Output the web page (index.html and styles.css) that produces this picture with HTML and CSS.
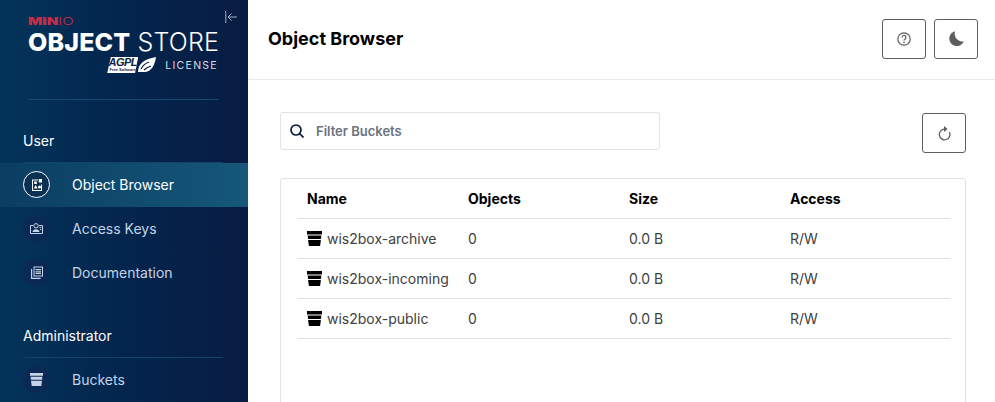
FILE: index.html
```html
<!DOCTYPE html>
<html lang="en">
<head>
<meta charset="utf-8">
<title>Object Browser</title>
<link rel="stylesheet" href="styles.css">
</head>
<body>
<div class="app">
  <aside class="sidebar">
    <div class="brand">
      <svg class="collapse" viewBox="0 0 12 12" width="12" height="12"><path d="M.8 0v12M12 6H3M6.500 2.500 3 6l3.500 3.500" fill="none" stroke="#9fb0c2" stroke-width="1"/></svg>
      <div class="logo-minio"><span class="min">MIN</span><span class="io">IO</span></div>
      <div class="logo-title"><b>OBJECT</b> <span>STORE</span></div>
      <div class="logo-license">
        <span class="agpl">
          <span class="agpl-box"><i>AGPL</i><small>Free Software</small></span>
          <svg viewBox="0 0 18 16" width="18" height="16"><path d="M0 15C0 7 6 2 18 0c-1 7-4 15-12 15Z" fill="#fff"/><path d="M3 12C5 8 8 6 11 5M6 13c2-2 4-3 7-4" fill="none" stroke="#0a2448" stroke-width="1.200"/></svg>
        </span>
        <span class="lic">LICENSE</span>
      </div>
    </div>
    <div class="brand-rule"></div>

    <div class="section-label user-label">User</div>
    <div class="section-rule"></div>
    <a class="nav-item active">
      <span class="nav-icon"><svg viewBox="0 0 10 12" width="10" height="12"><path fill-rule="evenodd" d="M0 .5h6v1H1v9.500h8V5.500h1V12H0Z" fill="#fff"/><path d="M6.800 0H10v3.600H6.800ZM2.200 2.500h2.600v2.600H2.200ZM3.700 6l2 3.500H1.700ZM7.500 6.500a1.500 1.500 0 1 1 0 3 1.500 1.500 0 0 1 0-3Z" fill="#fff"/></svg></span>
      <span>Object Browser</span>
    </a>
    <a class="nav-item">
      <span class="nav-icon"><svg viewBox="0 0 13 11" width="13" height="11"><path d="M3 2.500H.5v8h12v-8H9" fill="none" stroke="#c5d3e6"/><circle cx="6" cy="2.800" r="2.200" fill="none" stroke="#c5d3e6"/><path d="M2.500 9c.3-2 1.500-2.800 3.500-2.800S9.200 7 9.500 9Z" fill="#c5d3e6"/><path d="M9.500 4.500h1.800M10 6.500h1.300" stroke="#c5d3e6"/></svg></span>
      <span>Access Keys</span>
    </a>
    <a class="nav-item">
      <span class="nav-icon"><svg viewBox="0 0 12 13" width="12" height="13"><path d="M.6 3v9.400h9" fill="none" stroke="#c5d3e6" stroke-width="1.200"/><path fill-rule="evenodd" d="M2.500.5H12v10H2.500ZM3.500 1.500v8H11v-8ZM4.500 3h5.500v1.200H4.500Zm0 2.200h5.500v1.200H4.500Zm0 1.900h5.500v1H4.500Z" fill="#c5d3e6"/></svg></span>
      <span>Documentation</span>
    </a>

    <div class="section-label admin-label">Administrator</div>
    <div class="section-rule"></div>
    <a class="nav-item">
      <span class="nav-icon"><svg viewBox="0 0 13 13" width="13" height="13"><path d="M0 0h13v2.800H0ZM.6 3.800h11.800l-.3 3H.9ZM1 7.800h11L11.300 13H1.700Z" fill="#c5d3e6"/></svg></span>
      <span>Buckets</span>
    </a>
  </aside>

  <main class="main">
    <header class="topbar">
      <h1>Object Browser</h1>
      <div class="top-actions">
        <button class="icon-btn" type="button"><svg viewBox="0 0 14 14" width="14" height="14"><circle cx="7" cy="7" r="6.200" fill="none" stroke="#5e5e5e" stroke-width="1.200"/><path d="M5 5.500a2 2 0 1 1 3 1.700c-.7.400-1 .8-1 1.400" fill="none" stroke="#5e5e5e" stroke-width="1.200"/><circle cx="7" cy="10.400" r=".8" fill="#5e5e5e"/></svg></button>
        <button class="icon-btn" type="button"><svg viewBox="0 0 15 15" width="15" height="15"><path d="M6 .3A8 8 0 0 0 14.700 10.500 7.500 7.500 0 1 1 6 .3Z" fill="#5e5e5e"/></svg></button>
      </div>
    </header>
    <section class="content">
      <div class="toolbar">
        <label class="search">
          <svg viewBox="0 0 14 14" width="14" height="14"><circle cx="6" cy="6" r="5" fill="none" stroke="#081c42" stroke-width="1.700"/><path d="m9.500 9.500 4 4" stroke="#081c42" stroke-width="1.700"/></svg>
          <span>Filter Buckets</span>
        </label>
        <button class="icon-btn refresh" type="button"><svg viewBox="0 0 13 15" width="13" height="15"><path d="M6.500 3.200A5.300 5.300 0 1 0 11.300 6" fill="none" stroke="#5e5e5e" stroke-width="1.300"/><path d="M6 0v6l3.600-3Z" fill="#5e5e5e"/></svg></button>
      </div>
      <div class="card">
        <table>
          <thead>
            <tr><th class="c1">Name</th><th class="c2">Objects</th><th class="c3">Size</th><th>Access</th></tr>
          </thead>
          <tbody>
            <tr><td><span class="bucket"><svg viewBox="0 0 15 15" width="15" height="15"><path d="M0 0h15v3.500H0ZM.7 4.500h13.600l-.3 3.500H1ZM1.100 9h12.800l-.8 6H1.900Z" fill="#000"/></svg>wis2box-archive</span></td><td>0</td><td>0.0 B</td><td>R/W</td></tr>
            <tr><td><span class="bucket"><svg viewBox="0 0 15 15" width="15" height="15"><path d="M0 0h15v3.500H0ZM.7 4.500h13.600l-.3 3.500H1ZM1.100 9h12.800l-.8 6H1.900Z" fill="#000"/></svg>wis2box-incoming</span></td><td>0</td><td>0.0 B</td><td>R/W</td></tr>
            <tr><td><span class="bucket"><svg viewBox="0 0 15 15" width="15" height="15"><path d="M0 0h15v3.500H0ZM.7 4.500h13.600l-.3 3.500H1ZM1.100 9h12.800l-.8 6H1.900Z" fill="#000"/></svg>wis2box-public</span></td><td>0</td><td>0.0 B</td><td>R/W</td></tr>
          </tbody>
        </table>
      </div>
    </section>
  </main>
</div>
</body>
</html>
```

FILE: styles.css
```css
* { box-sizing: border-box; }
html, body { margin: 0; height: 100%; overflow: hidden; background: #fff; }
body { font-family: Inter, "Liberation Sans", sans-serif; color: #000; }
.app { display: flex; height: 402px; overflow: hidden; }

.sidebar {
  width: 248px; flex: none; height: 402px; overflow: hidden;
  background: linear-gradient(90deg, #04345a 0%, #03264e 45%, #081c42 100%);
  color: #fff;
}
.brand { position: relative; height: 99px; padding: 16px 0 0 28px; }
.collapse { position: absolute; left: 225px; top: 11px; }
.logo-minio { font-family: Inter, sans-serif; font-size: 10px; line-height: 11px; height: 11px; font-weight: 900; transform: scaleX(1.5); transform-origin: 0 50%; color: #c72c48; }
.io { font-weight: 300; }
.logo-title { font-family: Inter, sans-serif; font-size: 25px; line-height: 27px; margin-top: 2px; white-space: nowrap; letter-spacing: .15px; }
.logo-title b { font-weight: 800; }
.logo-title span { font-weight: 300; }
.logo-license { display: flex; align-items: center; justify-content: flex-end; width: 190px; margin-top: 0; height: 18px; }
.agpl { display: flex; align-items: center; margin-right: 9px; }
.agpl-box { display: flex; flex-direction: column; align-items: center; width: 31px; height: 16px; background: #fff; color: #0a2448; clip-path: polygon(12% 0, 100% 0, 90% 100%, 0 100%); }
.agpl-box i { font: italic 700 11px/11px "Liberation Sans", sans-serif; letter-spacing: -.6px; }
.agpl-box small { font: 700 4px/4px "Liberation Sans", sans-serif; }
.lic { font-family: Inter, sans-serif; font-size: 10.500px; letter-spacing: 1.300px; color: #d5dde8; }
.brand-rule { height: 1px; width: 190px; margin-left: 28px; background: #144a70; }

.section-label { font-size: 14px; line-height: 17px; padding-left: 23px; color: #fff; }
.user-label { margin-top: 32px; }
.admin-label { margin-top: 32px; }
.section-rule { height: 1px; width: 200px; margin: 13px 0 0 23px; background: #124468; }
.nav-item { display: flex; align-items: center; gap: 22px; height: 44px; padding: 0 0 1px 23px; font-size: 14px; color: #c5d3e6; }
.nav-icon { width: 27px; height: 27px; border-radius: 50%; background: #0a2a55; display: flex; align-items: center; justify-content: center; flex: none; }
.nav-item.active { background: linear-gradient(90deg, #0b3d62 0%, #15587a 100%); color: #fff; }
.nav-item.active .nav-icon { background: #0b3152; border: 1px solid #fff; }

.main { flex: 1; min-width: 0; }
.topbar { height: 80px; border-bottom: 1px solid #eaeaea; display: flex; align-items: center; justify-content: space-between; padding: 0 17px 0 20px; }
.topbar h1 { font-size: 18px; font-weight: 700; margin: 0 0 2px; }
.top-actions { display: flex; gap: 8px; margin-top: -2px; }
.icon-btn { width: 44px; height: 40px; padding: 0; background: #fff; border: 1px solid #5e5e5e; border-radius: 3px; display: flex; align-items: center; justify-content: center; }
.content { padding: 32px 29px 0 32px; }
.toolbar { display: flex; justify-content: space-between; align-items: flex-start; }
.search { width: 380px; height: 38px; border: 1px solid #e2e2e2; border-radius: 3px; display: flex; align-items: center; gap: 12px; padding-left: 9px; font-size: 13px; font-weight: 600; color: #6b7280; }
.refresh { margin-top: 1px; }
.card { margin-top: 25px; height: 240px; border: 1px solid #e2e2e2; border-radius: 3px; padding: 0 14px 0 16px; }
table { border-collapse: collapse; width: 100%; table-layout: fixed; font-size: 14px; }
th { text-align: left; font-weight: 700; height: 39px; padding: 0 0 0 10px; border-bottom: 1px solid #e2e2e2; font-size: 14px; }
td { height: 40px; padding: 1px 0 0 10px; border-bottom: 1px solid #e2e2e2; color: #404040; }
.c1, .c2, .c3 { width: 161px; }
.bucket { display: flex; align-items: center; gap: 5px; white-space: nowrap; }
.bucket svg { margin-top: -1px; }
```
